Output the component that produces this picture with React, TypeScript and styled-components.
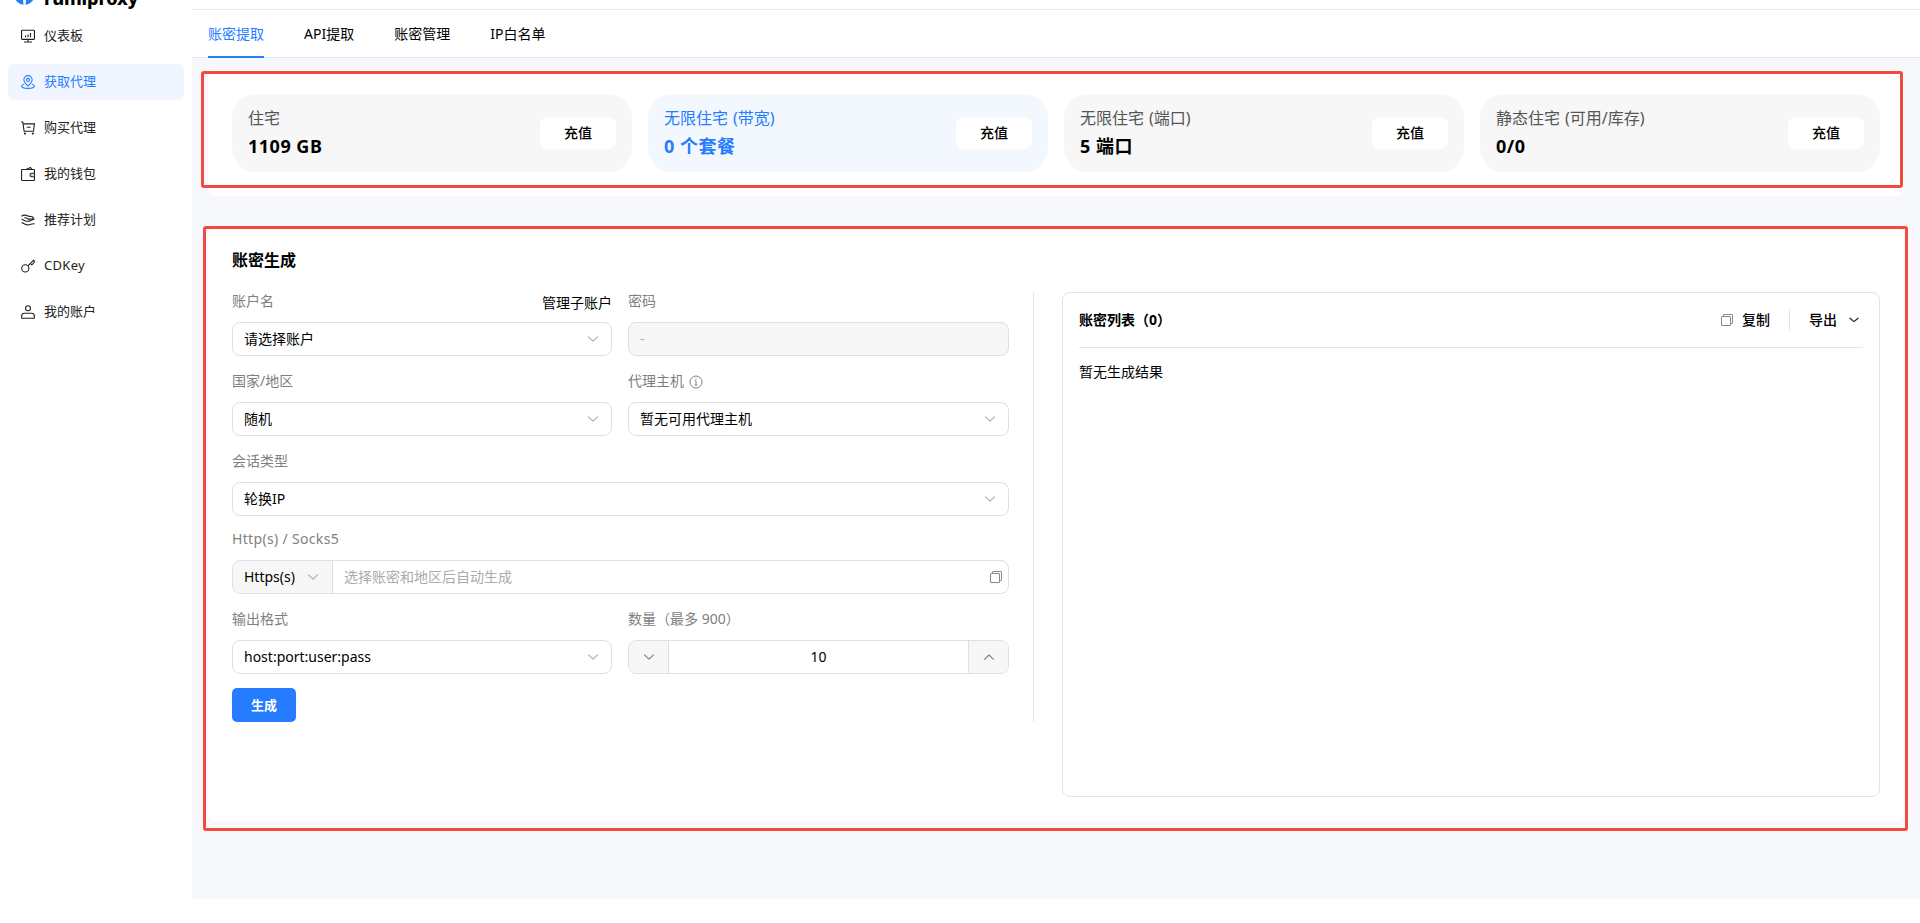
import React from "react";
import styled, { createGlobalStyle, css } from "styled-components";

const GlobalStyle = createGlobalStyle`
  * { box-sizing: border-box; }
  body {
    margin: 0;
    background: #fff;
    color: #000;
    font-family: "Noto Sans", "Noto Sans CJK SC", sans-serif;
    font-size: 14px;
    line-height: 20px;
    overflow: hidden;
  }
  button { font: inherit; color: inherit; border: 0; padding: 0; background: none; }
`;

const Shell = styled.div`
  display: flex;
  height: 923px;
  background: #fff;
`;

/* ---------- sidebar ---------- */

const Sidebar = styled.aside`
  width: 192px;
  padding: 0 8px;
  background: #fff;
`;

const Brand = styled.div`
  display: flex;
  align-items: flex-end;
  height: 18px;
  padding-left: 6px;
  overflow: hidden;
`;

const BrandMark = styled.svg`
  flex: none;
  margin-bottom: 12px;
`;

const BrandName = styled.span`
  flex: none;
  margin: 0 0 10px 9px;
  font-size: 18px;
  font-weight: 800;
  line-height: 20px;
  letter-spacing: -0.1px;
`;

const Nav = styled.nav`
  display: flex;
  flex-direction: column;
  gap: 10px;
`;

const NavItem = styled.a<{ $active?: boolean }>`
  display: flex;
  align-items: center;
  gap: 9px;
  height: 36px;
  padding-left: 13px;
  border-radius: 6px;
  font-size: 13px;
  color: ${(p) => (p.$active ? "#257cff" : "#222")};
  background: ${(p) => (p.$active ? "#f0f5ff" : "transparent")};
`;

const NavText = styled.span<{ $latin?: boolean }>`
  padding-bottom: 2px;
  letter-spacing: ${(p) => (p.$latin ? "0.3px" : "normal")};
`;

const NavIcon = styled.svg`
  width: 14px;
  height: 14px;
  fill: none;
  stroke: currentColor;
  stroke-width: 1.1;
`;

/* ---------- main area ---------- */

const Main = styled.main`
  width: 1728px;
`;

const TopStrip = styled.div`
  height: 10px;
  border-bottom: 1px solid #e6e8ec;
`;

const Tabs = styled.div`
  display: flex;
  gap: 40px;
  height: 48px;
  padding-left: 16px;
  border-bottom: 1px solid #e4e7ed;
`;

const Tab = styled.a<{ $active?: boolean }>`
  height: 48px;
  line-height: 48px;
  color: ${(p) => (p.$active ? "#257cff" : "#000")};
  border-bottom: 2px solid ${(p) => (p.$active ? "#257cff" : "transparent")};
`;

const Content = styled.div`
  height: 841px;
  padding: 12px 16px 0;
  background: #f6f8fc;
`;

const Highlighted = styled.div`
  position: relative;
`;

const Marker = styled.div<{ $inset: string }>`
  position: absolute;
  inset: ${(p) => p.$inset};
  border: 3px solid #f24a3f;
  border-radius: 3px;
  pointer-events: none;
`;

const Stats = styled.section`
  display: flex;
  gap: 16px;
  height: 126px;
  padding: 24px;
  border-radius: 8px;
  background: #fff;
`;

const StatCard = styled.div<{ $active?: boolean }>`
  display: flex;
  flex: 1;
  align-items: center;
  justify-content: space-between;
  height: 78px;
  padding: 0 16px;
  border-radius: 24px;
  background: ${(p) => (p.$active ? "#f3f8ff" : "#f7f7f7")};
  color: ${(p) => (p.$active ? "#257cff" : "#000")};
`;

const StatText = styled.div`
  padding-bottom: 2px;
`;

const StatLabel = styled.div<{ $active?: boolean }>`
  font-size: 16px;
  line-height: 28px;
  word-spacing: 0.8px;
  color: ${(p) => (p.$active ? "#257cff" : "#555")};
`;

const StatValue = styled.div`
  font-size: 18px;
  font-weight: 700;
  line-height: 28px;
  letter-spacing: 0.5px;
`;

const RechargeButton = styled.button`
  width: 76px;
  height: 32px;
  border-radius: 8px;
  background: #fff;
  color: #000;
  font-weight: 500;
`;

const Generator = styled.section`
  height: 593px;
  margin-top: 32px;
  padding: 20px 24px 24px;
  border-radius: 8px;
  background: #fff;
`;

const Title = styled.h2`
  margin: 0 0 20px;
  font-size: 16px;
  font-weight: 700;
  line-height: 24px;
`;

const Columns = styled.div`
  display: flex;
  align-items: flex-start;
  gap: 28px;
`;

const Form = styled.div`
  display: flex;
  flex-direction: column;
  gap: 16px;
  width: 802px;
  height: 430px;
  padding-right: 24px;
  border-right: 1px solid #e4e4e6;
`;

const Row = styled.div`
  display: grid;
  grid-template-columns: 380px 1fr;
  gap: 16px;
`;

const Field = styled.div`
  min-width: 0;
`;

const Label = styled.div`
  display: flex;
  align-items: flex-start;
  height: 30px;
  line-height: 18px;
  color: #808080;
`;

const ProtocolLabel = styled(Label)`
  height: 28px;
  line-height: 14px;
  letter-spacing: 0.33px;
`;

const LabelLink = styled.a`
  margin-left: auto;
  padding-top: 2px;
  color: #000;
`;

const control = css`
  display: flex;
  align-items: center;
  height: 34px;
  border: 1px solid #dcdfe6;
  border-radius: 8px;
`;

const Select = styled.div`
  ${control}
  justify-content: space-between;
  padding: 0 12px 0 11px;
`;

const DisabledInput = styled.div`
  ${control}
  padding: 0 11px;
  background: #f7f7f7;
  color: #a8abb2;
`;

const InputGroup = styled.div`
  ${control}
  overflow: hidden;
`;

const Prefix = styled.div`
  display: flex;
  align-items: center;
  justify-content: space-between;
  width: 100px;
  height: 100%;
  padding: 0 13px 0 11px;
  border-right: 1px solid #dcdfe6;
  background: #f7f7f7;
`;

const Placeholder = styled.span`
  flex: 1;
  padding-left: 11px;
  color: #a8abb2;
`;

const CopyIconSlot = styled.span<{ $gap: number }>`
  display: flex;
  margin-right: ${(p) => p.$gap}px;
`;

const StepButton = styled.button<{ $side: "left" | "right" }>`
  display: flex;
  align-items: center;
  justify-content: center;
  width: 40px;
  height: 100%;
  background: #f7f7f7;
  ${(p) => (p.$side === "left" ? "border-right" : "border-left")}: 1px solid #dcdfe6;
`;

const Count = styled.span`
  flex: 1;
  text-align: center;
`;

const SubmitButton = styled.button`
  width: 64px;
  height: 34px;
  margin-top: -2px;
  border-radius: 5px;
  background: #257cff;
  color: #fff;
  font-size: 13px;
  font-weight: 700;
`;

const Results = styled.div`
  width: 818px;
  height: 505px;
  padding: 0 16px;
  border: 1px solid #e4e4e6;
  border-radius: 8px;
`;

const ResultsHeader = styled.div`
  display: flex;
  align-items: center;
  height: 55px;
  border-bottom: 1px solid #e4e4e6;
`;

const ResultsTitle = styled.span`
  flex: 1;
  font-weight: 700;
`;

const HeaderAction = styled.button`
  display: flex;
  align-items: center;
  font-weight: 500;
`;

const ExportChevron = styled.span`
  display: flex;
  margin: 0 4px 0 12px;
`;

const Separator = styled.span`
  width: 1px;
  height: 20px;
  margin: 0 19px;
  background: #e4e4e6;
`;

const Empty = styled.div`
  padding-top: 14px;
`;

function Chevron({ color = "#a8abb2", up = false }: { color?: string; up?: boolean }) {
  return (
    <svg width="12" height="12" viewBox="0 0 12 12" fill="none" stroke={color} strokeWidth="1.1" strokeLinecap="round" strokeLinejoin="round">
      <path d={up ? "M1.5 8.3 6 4l4.5 4.3" : "M1.5 3.8 6 8.1l4.5-4.3"} />
    </svg>
  );
}

function CopyIcon() {
  return (
    <svg width="12" height="12" viewBox="0 0 12 12" fill="none" stroke="#888" strokeWidth="1">
      <rect x="0.5" y="2.5" width="9" height="9" rx=".5" />
      <path d="M2.5 2.5V1a.5.5 0 0 1 .5-.5h8a.5.5 0 0 1 .5.5v8a.5.5 0 0 1-.5.5H9.500" />
    </svg>
  );
}

const InfoGlyph = styled.svg`
  margin: 3px 0 0 5px;
`;

const navItems: { label: string; active?: boolean; latin?: boolean; icon: React.ReactNode }[] = [
  {
    label: "仪表板",
    icon: (
      <>
        <rect x=".55" y="1.2" width="12.9" height="9.2" rx=".6" />
        <path d="M4.5 8.2V6.6M7 8.2V5.4M9.5 8.2V4M7 10.4v2.2M3 13h8" />
      </>
    ),
  },
  {
    label: "获取代理",
    active: true,
    icon: (
      <>
        <path d="M7 11C4.300 8.500 2.900 6.700 2.900 4.700a4.100 4.100 0 0 1 8.200 0C11.100 6.700 9.700 8.500 7 11z" />
        <circle cx="7" cy="4.900" r="1.500" />
        <path d="M3.200 9.300C1.600 9.700.6 10.300.6 11.100c0 1.400 2.900 2.300 6.400 2.300s6.400-.9 6.400-2.300c0-.8-1-1.400-2.600-1.800" />
      </>
    ),
  },
  {
    label: "购买代理",
    icon: (
      <>
        <path d="M0 1h1.800l1.300 9.300h9.600M2.200 2.900h11.200l-.9 7.400M5.800 6.200h3.800" />
        <circle cx="4" cy="12.600" r=".5" />
        <circle cx="11.800" cy="12.600" r=".5" />
      </>
    ),
  },
  {
    label: "我的钱包",
    icon: (
      <>
        <rect x=".55" y="2.500" width="12.900" height="11" rx=".8" />
        <path d="M5 2.400 9.500.5l1.300 1.900M13.400 6.200h-2.600a1.800 1.800 0 0 0 0 3.600h2.600" />
        <path d="M10.500 8h.9" />
      </>
    ),
  },
  {
    label: "推荐计划",
    icon: (
      <>
        <path d="M.5 3.200C3 1.300 5 2 7 2.900c2 .9 3 .3 4.200.8 2.200 1 1 2-.4 1.900" />
        <path d="M.5 6.300c2.100.3 2.700 2 5.200 2 1.800 0 2.800.2 4-.8 1.300-1.200 2.300-1.200 3.800-1.100" />
        <path d="M3.300 4.900c1.300-.6 2.200.1 3.400.8 1.200.8 2.500.5 3.800.2M.7 9.600c1.800.1 2.700 2.300 5.600 2.300 3.500 0 4.300-1.600 7.200-1" />
      </>
    ),
  },
  {
    label: "CDKey",
    latin: true,
    icon: (
      <>
        <circle cx="4.300" cy="9.400" r="3.600" />
        <path d="M6.900 6.800 12.900.9M9.400 4.300l1.500 1.500 2.200-2.200V.9" />
      </>
    ),
  },
  {
    label: "我的账户",
    icon: (
      <>
        <circle cx="7" cy="3.200" r="2.500" />
        <path d="M.7 13.300v-2.400c0-1.700 1.100-2.700 2.700-2.700h7.200c1.600 0 2.700 1 2.700 2.700v2.400z" />
      </>
    ),
  },
];

const stats = [
  { label: "住宅", value: "1109 GB" },
  { label: "无限住宅 (带宽)", value: "0 个套餐", active: true },
  { label: "无限住宅 (端口)", value: "5 端口" },
  { label: "静态住宅 (可用/库存)", value: "0/0" },
];

const tabs = ["账密提取", "API提取", "账密管理", "IP白名单"];

export default function App() {
  return (
    <Shell>
      <GlobalStyle />
      <Sidebar>
        <Brand>
          <BrandMark width="21" height="22" viewBox="0 0 21 22">
            <circle cx="10.500" cy="11" r="10" fill="#257cff" />
            <path d="M10.500 0v22M1 8q9.500 2 9.500 13Q10.500 10 20 8" stroke="#fff" strokeWidth="2" fill="none" />
          </BrandMark>
          <BrandName>rumiproxy</BrandName>
        </Brand>
        <Nav>
          {navItems.map((item) => (
            <NavItem key={item.label} $active={item.active}>
              <NavIcon viewBox="0 0 14 14">{item.icon}</NavIcon>
              <NavText $latin={item.latin}>{item.label}</NavText>
            </NavItem>
          ))}
        </Nav>
      </Sidebar>

      <Main>
        <TopStrip />
        <Tabs>
          {tabs.map((tab, i) => (
            <Tab key={tab} $active={i === 0}>{tab}</Tab>
          ))}
        </Tabs>

        <Content>
          <Highlighted>
            <Stats>
              {stats.map((stat) => (
                <StatCard key={stat.label} $active={stat.active}>
                  <StatText>
                    <StatLabel $active={stat.active}>{stat.label}</StatLabel>
                    <StatValue>{stat.value}</StatValue>
                  </StatText>
                  <RechargeButton>充值</RechargeButton>
                </StatCard>
              ))}
            </Stats>
            <Marker $inset="1px 1px 8px -7px" />
          </Highlighted>

          <Highlighted>
            <Generator>
              <Title>账密生成</Title>
              <Columns>
                <Form>
                  <Row>
                    <Field>
                      <Label>账户名<LabelLink>管理子账户</LabelLink></Label>
                      <Select>请选择账户<Chevron /></Select>
                    </Field>
                    <Field>
                      <Label>密码</Label>
                      <DisabledInput>-</DisabledInput>
                    </Field>
                  </Row>
                  <Row>
                    <Field>
                      <Label>国家/地区</Label>
                      <Select>随机<Chevron /></Select>
                    </Field>
                    <Field>
                      <Label>
                        代理主机
                        <InfoGlyph width="14" height="14" viewBox="0 0 14 14" fill="none" stroke="#808080">
                          <circle cx="7" cy="7" r="6" />
                          <path d="M5.800 5.900H7v4M5.500 10h3M7 3.300v1.200" />
                        </InfoGlyph>
                      </Label>
                      <Select>暂无可用代理主机<Chevron /></Select>
                    </Field>
                  </Row>
                  <Field>
                    <Label>会话类型</Label>
                    <Select>轮换IP<Chevron /></Select>
                  </Field>
                  <Field>
                    <ProtocolLabel>Http(s) / Socks5</ProtocolLabel>
                    <InputGroup>
                      <Prefix>Https(s)<Chevron /></Prefix>
                      <Placeholder>选择账密和地区后自动生成</Placeholder>
                      <CopyIconSlot $gap={6}><CopyIcon /></CopyIconSlot>
                    </InputGroup>
                  </Field>
                  <Row>
                    <Field>
                      <Label>输出格式</Label>
                      <Select>host:port:user:pass<Chevron /></Select>
                    </Field>
                    <Field>
                      <Label>数量（最多 900）</Label>
                      <InputGroup>
                        <StepButton $side="left"><Chevron color="#808080" /></StepButton>
                        <Count>10</Count>
                        <StepButton $side="right"><Chevron color="#808080" up /></StepButton>
                      </InputGroup>
                    </Field>
                  </Row>
                  <SubmitButton>生成</SubmitButton>
                </Form>

                <Results>
                  <ResultsHeader>
                    <ResultsTitle>账密列表（0）</ResultsTitle>
                    <HeaderAction><CopyIconSlot $gap={9}><CopyIcon /></CopyIconSlot>复制</HeaderAction>
                    <Separator />
                    <HeaderAction>
                      导出
                      <ExportChevron>
                        <svg width="10" height="10" viewBox="0 0 10 10" fill="none" stroke="#222" strokeWidth="1.2" strokeLinecap="round" strokeLinejoin="round">
                          <path d="M1 3.200 5 6.600l4-3.400" />
                        </svg>
                      </ExportChevron>
                    </HeaderAction>
                  </ResultsHeader>
                  <Empty>暂无生成结果</Empty>
                </Results>
              </Columns>
            </Generator>
            <Marker $inset="-2px -4px -10px -5px" />
          </Highlighted>
        </Content>
      </Main>
    </Shell>
  );
}
